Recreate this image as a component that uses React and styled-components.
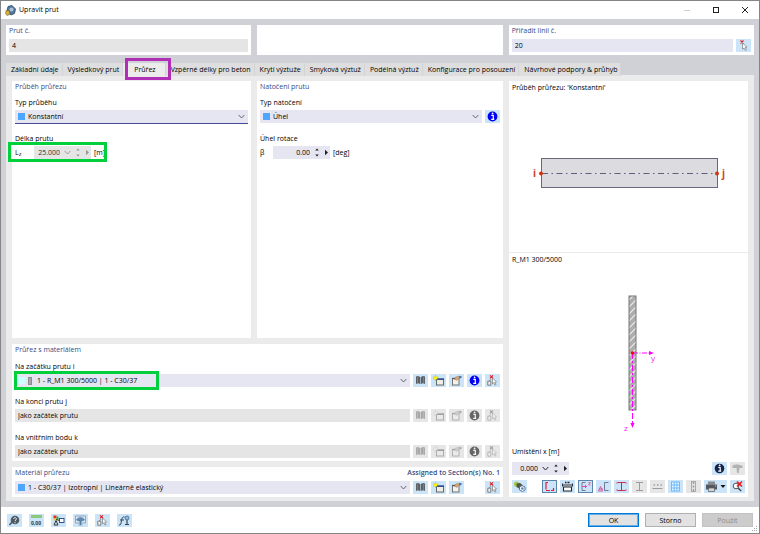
import React, { useState } from 'react';
import styled, { createGlobalStyle } from 'styled-components';

const GlobalStyle = createGlobalStyle`
  * {
    box-sizing: border-box;
  }
  body {
    margin: 0;
    background-color: #d0d0d7;
  }
  body, button, input, select {
    font-family: 'Open Sans', 'Noto Sans', sans-serif;
    font-size: 7px;
    color: #000000;
  }
  button, input, select {
    margin: 0;
    padding: 0;
    border: 0;
    border-radius: 0;
    min-width: 0;
  }
`;

const Window = styled.div`
  min-height: 100vh;
  display: flex;
  flex-direction: column;
  background-color: #d0d0d7;
  border: 1px solid #858585;
`;

const TitleBar = styled.header`
  height: 18px;
  display: flex;
  align-items: center;
  padding-left: 4px;
  gap: 3px;
  background-color: #ffffff;
`;

const WindowTitle = styled.h1`
  flex: 1;
  margin: 0;
  font-size: 7px;
  line-height: 16px;
  font-weight: 400;
  color: #000000;
`;

const WindowButtons = styled.div`
  display: flex;
`;

const WindowButton = styled.button`
  width: 29px;
  height: 16px;
  display: flex;
  align-items: center;
  justify-content: center;
  background: none;
`;

const TopRow = styled.div`
  display: grid;
  grid-template-columns: repeat(3, 1fr);
  gap: 6px;
  padding: 6px 5px 0;
`;

const Card = styled.section`
  background-color: #ffffff;
  padding: 0 3px 3px;
`;

const CardHead = styled.div`
  display: flex;
  justify-content: space-between;
`;

const CardTitle = styled.h2`
  margin: 0;
  font-size: 7px;
  line-height: 12px;
  font-weight: ${(props) => (props.$strong ? 600 : 500)};
  color: #354b84;
`;

const TopLabel = styled.label`
  display: block;
  height: 14px;
  line-height: 12px;
  font-weight: 500;
  color: #354b84;
`;

const Row = styled.div`
  position: relative;
  display: flex;
  align-items: center;
  gap: 3px;
`;

const Field = styled.div`
  padding-top: ${(props) => props.$top || 9}px;
`;

const Label = styled.label`
  display: block;
  height: 13px;
  line-height: 12px;
`;

const TextInput = styled.input`
  flex: 1;
  height: 13px;
  padding: 0 3px;
  background-color: ${(props) => (props.$muted ? '#e5e5e5' : '#e6e6f2')};
  color: #000000;
`;

const SelectBox = styled.div`
  flex: 1;
  height: 13px;
  display: flex;
  align-items: center;
  gap: 3px;
  padding: 0 3px;
  background-color: #e6e6f2;
  box-shadow: ${(props) => (props.$focused ? '0 1px 0 #454c96' : 'none')};
`;

const NativeSelect = styled.select`
  flex: 1;
  height: 13px;
  appearance: none;
  background: none;
  outline: none;
`;

const Swatch = styled.span`
  width: 7px;
  height: 7px;
  background-color: ${(props) => props.$color};
`;

const SectionMark = styled.span`
  width: 4px;
  height: 8px;
  margin-right: 2px;
  background-color: #a8a8a8;
  border: 1px solid #8c8c8c;
`;

const Tabs = styled.nav`
  display: flex;
  height: 12px;
  margin: 8px 5px 0;
`;

const Tab = styled.button`
  position: relative;
  height: 13px;
  padding: ${(props) => (props.$active ? '0 10px 0 11px' : '0 4px 0 5px')};
  line-height: 13px;
  white-space: nowrap;
  background-color: ${(props) => (props.$active ? '#ebebeb' : '#dedede')};
  box-shadow: inset -1px 0 0 #d4d4d6;
`;

const Body = styled.main`
  flex: 1;
  display: grid;
  grid-template-columns: 491fr 239fr;
  gap: 6px;
  margin: 0 5px 6px;
  padding: 6px 6px 4px;
  background-color: #ebebeb;
`;

const LeftSide = styled.div`
  display: flex;
  flex-direction: column;
  gap: 6px;
`;

const Pair = styled.div`
  flex: 1;
  display: grid;
  grid-template-columns: 239fr 246fr;
  gap: 6px;
`;

const Preview = styled.section`
  display: flex;
  flex-direction: column;
  background-color: #ffffff;
`;

const Pane = styled.div`
  border-bottom: ${(props) => (props.$line ? '1px solid #ebebeb' : '0')};
`;

const PaneTitle = styled.h3`
  margin: 0;
  padding: 0 3px;
  font-size: 7px;
  line-height: 13px;
  font-weight: 400;
`;

const Drawing = styled.svg`
  display: block;
  width: 100%;
`;

const PreviewTools = styled.div`
  margin-top: auto;
  padding: 0 3px 4px;
`;

const ToolRow = styled.div`
  display: flex;
  gap: 3px;
  margin-top: ${(props) => props.$top}px;
`;

const Spacer = styled.span`
  flex: 1;
`;

const Blank = styled.span`
  width: 15px;
`;

const IconBox = styled.button`
  flex: none;
  width: ${(props) => (props.$wide ? 23 : 15)}px;
  height: 13px;
  display: flex;
  align-items: center;
  justify-content: center;
  background-color: ${(props) => (props.disabled ? '#e6e6e6' : '#cce4f7')};
  box-shadow: ${(props) => (props.$pressed ? 'inset 0 0 0 1px #5a86ae' : 'none')};

  svg {
    display: block;
    filter: ${(props) => (props.disabled ? 'grayscale(1)' : 'none')};
    opacity: ${(props) => (props.disabled ? props.$fade || 0.45 : 1)};
  }
`;

const Symbol = styled.label`
  width: ${(props) => props.$width}px;

  sub {
    font-size: 6px;
    vertical-align: -1px;
  }
`;

const SpinBox = styled.div`
  width: 57px;
  height: 13px;
  display: flex;
  align-items: center;
  gap: 4px;
  padding-right: 1px;
  background-color: ${(props) => (props.$muted ? '#e5e5e5' : '#e6e6f2')};
  color: ${(props) => (props.$muted ? '#9a9a9a' : '#202020')};
`;

const SpinInput = styled.input`
  flex: 1;
  width: 20px;
  height: 13px;
  text-align: right;
  background: none;
  color: ${(props) => (props.disabled ? '#303030' : '#000000')};
`;

const SpinButton = styled.button`
  height: 13px;
  display: flex;
  align-items: center;
  background: none;
  color: inherit;
`;

const Marker = styled.span`
  position: absolute;
  z-index: 2;
  top: ${(props) => props.$top}px;
  left: ${(props) => props.$left}px;
  width: ${(props) => props.$width}px;
  height: ${(props) => props.$height}px;
  border: 3px solid ${(props) => props.$color};
  pointer-events: none;
`;

const Footer = styled.footer`
  position: relative;
  height: 26px;
  display: flex;
  align-items: center;
  gap: 7px;
  padding: 0 6px;
  background-color: #ffffff;
`;

const DialogButtons = styled.div`
  display: flex;
  gap: 6px;
`;

const DialogButton = styled.button`
  width: 51px;
  height: 14px;
  background-color: ${(props) => (props.disabled ? '#cccccc' : '#e2e2e2')};
  color: ${(props) => (props.disabled ? '#8c8c8c' : '#000000')};
  border: ${(props) => (props.disabled ? '1px solid #c2c2c2' : '1px solid #b0b0b0')};
  ${(props) => props.$primary && 'border: 1px solid #0078d7; box-shadow: inset 0 0 0 1px #66aee7;'}
`;

const Grip = styled.svg`
  position: absolute;
  right: 1px;
  bottom: 1px;
`;

function Chevron({ color = '#666' }) {
  return (
    <svg width="7" height="5" viewBox="0 0 7 5">
      <path d="M.7 1 3.5 4 6.3 1" fill="none" stroke={color} />
    </svg>
  );
}

// all toolbar drawings share the 15 x 13 box of their button
const icons = {
  book: (
    <g>
      <path d="M3 2.5 5 2l2.2 1v7L5 9.2 3 10z M12 2.5 10 2 7.8 3v7l2.2-.8 2 .8z" fill="#5d6064" />
      <path d="M4.5 3v6M10.5 3v6" stroke="#8a8e92" strokeWidth=".7" />
    </g>
  ),
  create: (
    <g>
      <rect x="5.5" y="5.5" width="7" height="5.5" fill="#f1eee6" stroke="#5c5c5c" strokeWidth=".9" />
      <path d="M5 5h8" stroke="#1d3d94" strokeWidth="1.3" />
      <path d="M4.5 1v6M2 4h5.5M2.8 2.2l3.5 3.5M6.3 2.2 2.8 5.7" stroke="#a3a52c" strokeWidth=".6" />
      <circle cx="4.6" cy="4" r="1.8" fill="#fff200" />
    </g>
  ),
  edit: (
    <g>
      <rect x="3.5" y="4.5" width="6.5" height="6.5" fill="#f4f1e9" stroke="#666" strokeWidth=".9" />
      <path d="M3 4.5h4" stroke="#555" strokeWidth="1.3" />
      <path d="M5.5 5.5 6.5 3l4-1 1 2L9 5 8 6.500l-1-.8z" fill="#d9a578" stroke="#8a6a52" strokeWidth=".4" />
      <path d="M10 2.2 12.5 2v1.800l-2 .7z" fill="#3e6eae" />
    </g>
  ),
  info: (
    <g>
      <circle cx="7.5" cy="6.5" r="4.9" fill="#0000f5" />
      <path d="M6.3 5.3h2v3.8M6.2 9.3h3" fill="none" stroke="#fff" strokeWidth="1.2" />
      <circle cx="7.6" cy="3.3" r=".9" fill="#fff" />
    </g>
  ),
  infoDark: (
    <g>
      <circle cx="7.5" cy="6.5" r="4.8" fill="#13254d" />
      <path d="M6.3 5.5h1.9V9M6.2 9.2h3" fill="none" stroke="#fff" strokeWidth="1.2" />
      <circle cx="7.6" cy="3.4" r=".9" fill="#fff" />
    </g>
  ),
  pick: (
    <g>
      <path d="m5 1.3 3 3M8 1.3l-3 3" stroke="#e01b24" strokeWidth="1.1" />
      <path d="M2.8 7.2h3v4h-3zM6 5.2 4.3 7" fill="#f3f3f3" stroke="#666" strokeWidth=".8" />
      <path d="m7.5 4 4 4-1.8.2 1.3 2.3-1.1.6-1.2-2.3-1.2 1.1z" fill="#fff" stroke="#777" strokeWidth=".7" />
    </g>
  ),
  cursor: (
    <g>
      <path d="m4.5 1.5 3 3M7.5 1.5l-3 3" stroke="#e01b24" strokeWidth="1.1" />
      <path d="m6.5 4 4.5 4.2-1.9.2 1.4 2.3-1.1.7L8 9l-1.4 1.2z" fill="#fff" stroke="#777" strokeWidth=".7" />
    </g>
  ),
  render: (
    <g>
      <path d="M2 2.5 5 1.5 7.5 3v3L4.5 7 2 5.5z" fill="#a9c94c" />
      <path d="M4.500 3.5 8 3l2.5 2v3L7 8.5 4.500 7z" fill="#4c5b49" />
      <path d="M7.5 7 10 5.5 13 7v3l-2.5 1.5-3-1.5z" fill="#f4f6f8" stroke="#3d5f94" strokeWidth=".8" />
      <circle cx="10.3" cy="8.5" r="1.3" fill="#5f82b4" />
    </g>
  ),
  shape: (
    <path
      d="M6 2.5H4v8h7.5V8"
      fill="none"
      stroke="#df1c46"
      strokeWidth="1.2"
      strokeDasharray="9 1 4 1"
    />
  ),
  dims: (
    <g fill="none" stroke="#222">
      <path d="M3.5 7v4h8V7z" fill="#fff" strokeWidth="1.1" />
      <path d="M2.5 5h10M2.5 3.5v3M12.5 3.5v3" strokeWidth=".9" />
      <path d="M5 2.5h5" strokeWidth="1.3" strokeDasharray="1 .5" />
    </g>
  ),
  axisE: (
    <g fill="none">
      <path d="M7.5 2.5H4v8h3.5" stroke="#666d8a" strokeWidth=".9" />
      <path d="M4 6.5h5M7.5 5v3" stroke="#e04bb4" />
      <path d="M10.5 2.5h2l-2 2.5h2" stroke="#d84a79" strokeWidth=".7" />
    </g>
  ),
  axisC: (
    <g fill="none">
      <path d="M12.5 2.5h-4v8h4" stroke="#666d8a" strokeWidth=".9" />
      <path d="m2.5 11 2-4.5 2 4.500zM3 9h4" stroke="#e04b98" strokeWidth=".9" />
    </g>
  ),
  beamRed: (
    <g fill="none">
      <path d="M3.5 2.5h8M3.5 10.5h8" stroke="#d52a50" strokeWidth="1.2" />
      <path d="M7.5 3v7" stroke="#4d5870" />
      <path d="M3 2v2M12 2v2M3 9v2M12 9v2" stroke="#d52a50" strokeWidth=".6" />
    </g>
  ),
  beam: <path d="M4 2.5h7M4 10.5h7M7.5 3v7" fill="none" stroke="#444" />,
  dots: (
    <g stroke="#444" fill="none">
      <path d="M2.5 8.5h10" />
      <path d="M3.5 5H5M7 5h1.500M10.500 5H12" strokeWidth="1.5" />
    </g>
  ),
  grid: (
    <g fill="none" stroke="#62b5ff" strokeWidth=".9">
      <rect x="3.5" y="2" width="8" height="9" fill="#e8f4ff" />
      <path d="M6.2 2v9M8.9 2v9M3.5 5h8M3.5 8h8" />
    </g>
  ),
  column: (
    <g fill="none" stroke="#444" strokeWidth=".8">
      <rect x="5.5" y="1.5" width="4" height="10" />
      <path d="M7.5 2v9" strokeDasharray="2 1.5" strokeWidth="1.5" />
    </g>
  ),
  printer: (
    <g>
      <path d="M4 1.5h7v3H4z" fill="#8a8a8a" />
      <path d="M2 4.5h11v5H2z" fill="#54585e" />
      <path d="M4.5 8h6v3.500h-6z" fill="#d5d8db" stroke="#555" strokeWidth=".7" />
      <path d="M11 6h1" stroke="#fff" strokeWidth=".7" />
    </g>
  ),
  zoomOff: (
    <g>
      <circle cx="6" cy="6" r="2.8" fill="#fff" stroke="#555" />
      <path d="m8 8 3.2 3" stroke="#444" strokeWidth="1.4" />
      <path d="m7 1.5 5 5M12 1.5l-5 5" stroke="#f01c1c" strokeWidth="1.6" />
    </g>
  ),
  filter: <path d="M2.5 3.5C5 2 9 2 12.5 4v2h-3L8.7 11H7L6.5 6h-4z" fill="#777" />,
  help: (
    <g>
      <circle cx="8" cy="6" r="4.3" fill="#4f5964" />
      <path d="m5 8-2.5 3" stroke="#4f5964" strokeWidth="1.6" />
      <path d="M6.6 5c0-2 3-1.7 2.800 0-.1 1-1.400 1-1.400 2.200" fill="none" stroke="#e7edf2" />
      <circle cx="8" cy="8.7" r=".6" fill="#e7edf2" />
    </g>
  ),
  units: (
    <g>
      <path d="M2 1h11v3H2z" fill="#8cc97c" />
      <text x="2" y="11" fontSize="5" fontWeight="700" fill="#25404f">0,00</text>
    </g>
  ),
  tree: (
    <g>
      <path d="M2.5 1.5h3v3h-3z" fill="#e92c22" />
      <path d="M2.5 4.5h3v2h-3z" fill="#f3d621" />
      <path d="M5.5 2.5h2v3h-2z" fill="#35b03c" />
      <path d="m3 11 2-4.5L7 11zM5 5.5l4 1" fill="none" stroke="#333" />
      <rect x="8.5" y="4.5" width="4.5" height="4" fill="#fff" stroke="#24408e" strokeWidth=".9" />
    </g>
  ),
  view: (
    <g>
      <path d="M2.5 2h10v7h-10zM5.5 11h4" fill="#d7e8f5" stroke="#7f97ab" strokeWidth=".8" />
      <path d="M3.5 6C5 2.5 10 2.5 11.5 6L9 7H8v3.500H7V7H6z" fill="#5f89b2" stroke="#436688" strokeWidth=".5" />
    </g>
  ),
  formula: (
    <g fill="none" stroke="#344452">
      <path d="M2 11c2 .5 2-2 2.500-4.500S5.500 2.500 7.500 3M3 6h4" />
      <path d="M8 10.5h4M10 5v5" strokeWidth="1.2" />
      <circle cx="10" cy="4" r="2" fill="#91bbe2" stroke="#3e668e" strokeWidth=".8" />
    </g>
  ),
};

function IconButton({ icon, label, disabled, pressed, fade }) {
  return (
    <IconBox type="button" aria-label={label} disabled={disabled} $pressed={pressed} $fade={fade}>
      <svg width="15" height="13" viewBox="0 0 15 13">
        {icons[icon]}
      </svg>
    </IconBox>
  );
}

function Dropdown({ id, value, color, focused, mark }) {
  return (
    <SelectBox $focused={focused}>
      <Swatch $color={color} />
      {mark && <SectionMark />}
      <NativeSelect id={id}>
        <option>{value}</option>
      </NativeSelect>
      <Chevron />
    </SelectBox>
  );
}

function Spin({ id, value, muted, list }) {
  return (
    <SpinBox $muted={muted}>
      <SpinInput id={id} defaultValue={value} disabled={muted} />
      {list && (
        <SpinButton type="button" aria-label="Seznam hodnot" disabled={muted}>
          <Chevron color="currentColor" />
        </SpinButton>
      )}
      <SpinButton type="button" aria-label="Krok" disabled={muted}>
        <svg width="6" height="9" viewBox="0 0 6 9">
          <path d="m1.2 2.5 1.800-2 1.800 2zM1.200 6.500l1.800 2 1.800-2z" fill="currentColor" />
        </svg>
      </SpinButton>
      <SpinButton type="button" aria-label="Další" disabled={muted}>
        <svg width="5" height="7" viewBox="0 0 5 7">
          <path d="m1 .8 3 2.700-3 2.700z" fill="currentColor" />
        </svg>
      </SpinButton>
    </SpinBox>
  );
}

function SectionButtons({ disabled }) {
  return (
    <>
      <IconButton icon="book" label="Knihovna" disabled={disabled} />
      <IconButton icon="create" label="Nový" disabled={disabled} />
      <IconButton icon="edit" label="Upravit" disabled={disabled} />
      <IconButton icon="info" label="Informace" disabled={disabled} fade={0.6} />
      <IconButton icon="pick" label="Vybrat" disabled={disabled} />
    </>
  );
}

function BeamDrawing() {
  return (
    <Drawing viewBox="0 0 239 158">
      <rect x="32.5" y="64.5" width="176" height="29" fill="#dcdce0" stroke="#67677f" />
      <path d="M33 79.5h175" stroke="#5f5f7b" strokeDasharray="6 3.5 1.5 3.5" />
      <circle cx="32" cy="79.5" r="2" fill="#cf3510" />
      <circle cx="208" cy="79.5" r="2" fill="#cf3510" />
      <text x="24" y="83" fontSize="10" fontWeight="700" fill="#d2451e">i</text>
      <text x="213" y="83" fontSize="10" fontWeight="700" fill="#d2451e">j</text>
    </Drawing>
  );
}

function SectionDrawing() {
  return (
    <Drawing viewBox="0 0 239 176">
      <defs>
        <pattern id="hatch" width="7" height="7" patternUnits="userSpaceOnUse">
          <path d="M-1 8 8-1M-1 1 1-1M6 8l2-2" stroke="#ececec" strokeWidth="1.2" />
        </pattern>
      </defs>
      <rect x="120" y="30" width="7" height="114" fill="#adadad" />
      <rect x="120" y="30" width="7" height="114" fill="url(#hatch)" stroke="#777" />
      <path d="M124 87h16" stroke="#ff00ff" strokeDasharray="5 1.5 1 1.5" />
      <path d="M123.5 87v70" stroke="#ff00ff" strokeDasharray="6 2 2 2" />
      <path d="m140 85 5 2-5 2zM121.5 157h4l-2 5z" fill="#ff00ff" />
      <circle cx="123.5" cy="87" r="1.7" fill="#ff0000" />
      <text x="142" y="95" fontSize="8" fill="#f020f0">y</text>
      <text x="115" y="165" fontSize="8" fill="#f020f0">z</text>
    </Drawing>
  );
}

const tabs = [
  'Základní údaje',
  'Výsledkový prut',
  'Průřez',
  'Vzpěrné délky pro beton',
  'Krytí výztuže',
  'Smyková výztuž',
  'Podélná výztuž',
  'Konfigurace pro posouzení',
  'Návrhové podpory & průhyb',
];

export default function App() {
  const [active, setActive] = useState('Průřez');
  return (
    <>
      <GlobalStyle />
      <Window>
        <TitleBar>
          <svg width="11" height="11" viewBox="0 0 11 11">
            <path d="m3 1.5 4-1L10.500 4l-1 4.500L6 10 2 6z" fill="#54779f" stroke="#2b4662" strokeWidth=".8" />
            <circle cx="6.5" cy="4.5" r="2" fill="#a9c2d9" />
            <path d="M1 5.5h3l1 4-3 1-1.500-2z" fill="#d5b13b" stroke="#66552a" strokeWidth=".5" />
          </svg>
          <WindowTitle>Upravit prut</WindowTitle>
          <WindowButtons>
            <WindowButton type="button" aria-label="Minimalizovat" disabled>
              <svg width="8" height="8"><path d="M1 4.5h6" stroke="#cfcfcf" /></svg>
            </WindowButton>
            <WindowButton type="button" aria-label="Maximalizovat">
              <svg width="8" height="8"><rect x="1.5" y="1.5" width="5" height="5" fill="none" stroke="#222" /></svg>
            </WindowButton>
            <WindowButton type="button" aria-label="Zavřít">
              <svg width="8" height="8"><path d="m1 1 6 6M7 1 1 7" stroke="#222" /></svg>
            </WindowButton>
          </WindowButtons>
        </TitleBar>

        <TopRow>
          <Card>
            <TopLabel htmlFor="member">Prut č.</TopLabel>
            <Row><TextInput id="member" defaultValue="4" readOnly $muted /></Row>
          </Card>
          <Card />
          <Card>
            <TopLabel htmlFor="line">Přiřadit linii č.</TopLabel>
            <Row>
              <TextInput id="line" defaultValue="20" />
              <IconButton icon="cursor" label="Vybrat linii" />
            </Row>
          </Card>
        </TopRow>

        <Tabs>
          {tabs.map((name) => (
            <Tab key={name} type="button" $active={name === active} onClick={() => setActive(name)}>
              {name}
              {name === 'Průřez' && <Marker $color="#b02fb4" $top={-5} $left={2} $width={46} $height={22} />}
            </Tab>
          ))}
        </Tabs>

        <Body>
          <LeftSide>
            <Pair>
              <Card>
                <CardTitle>Průběh průřezu</CardTitle>
                <Field $top={4}>
                  <Label htmlFor="distribution">Typ průběhu</Label>
                  <Row><Dropdown id="distribution" value="Konstantní" color="#4da6ff" focused /></Row>
                </Field>
                <Field $top={10}>
                  <Label as="div">Délka prutu</Label>
                  <Row>
                    <Symbol htmlFor="length" $width={16}>L<sub>z</sub></Symbol>
                    <Spin id="length" value="25.000" muted list />
                    <span>[m]</span>
                    <Marker $color="#00d03c" $top={-4} $left={-7} $width={99} $height={20} />
                  </Row>
                </Field>
              </Card>
              <Card>
                <CardTitle>Natočení prutu</CardTitle>
                <Field $top={4}>
                  <Label htmlFor="rotation">Typ natočení</Label>
                  <Row>
                    <Dropdown id="rotation" value="Úhel" color="#4da6ff" />
                    <IconButton icon="info" label="Informace" />
                  </Row>
                </Field>
                <Field $top={10}>
                  <Label as="div">Úhel rotace</Label>
                  <Row>
                    <Symbol htmlFor="angle" $width={10}>β</Symbol>
                    <Spin id="angle" value="0.00" />
                    <span>[deg]</span>
                  </Row>
                </Field>
              </Card>
            </Pair>

            <Card>
              <CardTitle>Průřez s materiálem</CardTitle>
              <Field $top={5}>
                <Label htmlFor="start">Na začátku prutu i</Label>
                <Row>
                  <Dropdown id="start" value="1 - R_M1 300/5000 | 1 - C30/37" color="#ccffff" mark />
                  <SectionButtons />
                  <Marker $color="#00d03c" $top={-3} $left={-1} $width={145} $height={19} />
                </Row>
              </Field>
              <Field>
                <Label htmlFor="end">Na konci prutu j</Label>
                <Row>
                  <TextInput id="end" defaultValue="Jako začátek prutu" disabled $muted />
                  <SectionButtons disabled />
                </Row>
              </Field>
              <Field $top={10}>
                <Label htmlFor="inner">Na vnitřním bodu k</Label>
                <Row>
                  <TextInput id="inner" defaultValue="Jako začátek prutu" disabled $muted />
                  <SectionButtons disabled />
                </Row>
              </Field>
            </Card>

            <Card>
              <CardHead>
                <CardTitle as="label" htmlFor="material">Materiál průřezu</CardTitle>
                <CardTitle $strong>Assigned to Section(s) No. 1</CardTitle>
              </CardHead>
              <Field $top={2}>
                <Row>
                  <Dropdown id="material" value="1 - C30/37 | Izotropní | Lineárně elastický" color="#4da6ff" />
                  <IconButton icon="book" label="Knihovna" />
                  <IconButton icon="create" label="Nový" />
                  <IconButton icon="edit" label="Upravit" />
                  <Blank />
                  <IconButton icon="pick" label="Vybrat" />
                </Row>
              </Field>
            </Card>
          </LeftSide>

          <Preview>
            <Pane $line>
              <PaneTitle>Průběh průřezu: 'Konstantní'</PaneTitle>
              <BeamDrawing />
            </Pane>
            <Pane>
              <PaneTitle>R_M1 300/5000</PaneTitle>
              <SectionDrawing />
            </Pane>
            <PreviewTools>
              <Label htmlFor="position">Umístění x [m]</Label>
              <ToolRow $top={3}>
                <Spin id="position" value="0.000" list />
                <Spacer />
                <IconButton icon="infoDark" label="Informace" />
                <IconButton icon="filter" label="Filtr" disabled />
              </ToolRow>
              <ToolRow $top={5}>
                <IconButton icon="render" label="Zobrazení průřezu" />
                <Spacer />
                <IconButton icon="shape" label="Tvar" pressed />
                <IconButton icon="dims" label="Kóty" />
                <IconButton icon="axisE" label="Hlavní osy" pressed />
                <IconButton icon="axisC" label="Střed" />
                <IconButton icon="beamRed" label="Napěťové body" />
                <IconButton icon="beam" label="Profil" disabled />
                <IconButton icon="dots" label="Body" disabled />
                <IconButton icon="grid" label="Rastr" />
                <IconButton icon="column" label="Výztuž" disabled />
                <IconBox type="button" aria-label="Tisk" $wide>
                  <svg width="23" height="13" viewBox="0 0 23 13">
                    {icons.printer}
                    <path d="M16.5 5h5L19 8z" fill="#111" />
                  </svg>
                </IconBox>
                <IconButton icon="zoomOff" label="Zrušit zvětšení" />
              </ToolRow>
            </PreviewTools>
          </Preview>
        </Body>

        <Footer>
          <IconButton icon="help" label="Nápověda" />
          <IconButton icon="units" label="Jednotky" />
          <IconButton icon="tree" label="Zobrazení" />
          <IconButton icon="view" label="Pohled" />
          <IconButton icon="pick" label="Vybrat" />
          <IconButton icon="formula" label="Vzorec" />
          <Spacer />
          <DialogButtons>
            <DialogButton type="button" $primary>OK</DialogButton>
            <DialogButton type="button">Storno</DialogButton>
            <DialogButton type="button" disabled>Použít</DialogButton>
          </DialogButtons>
          <Grip width="6" height="6">
            <path d="M4 0h1v1H4zM2 2h1v1H2zM4 2h1v1H4zM0 4h1v1H0zM2 4h1v1H2zM4 4h1v1H4z" fill="#a8a8a8" />
          </Grip>
        </Footer>
      </Window>
    </>
  );
}
